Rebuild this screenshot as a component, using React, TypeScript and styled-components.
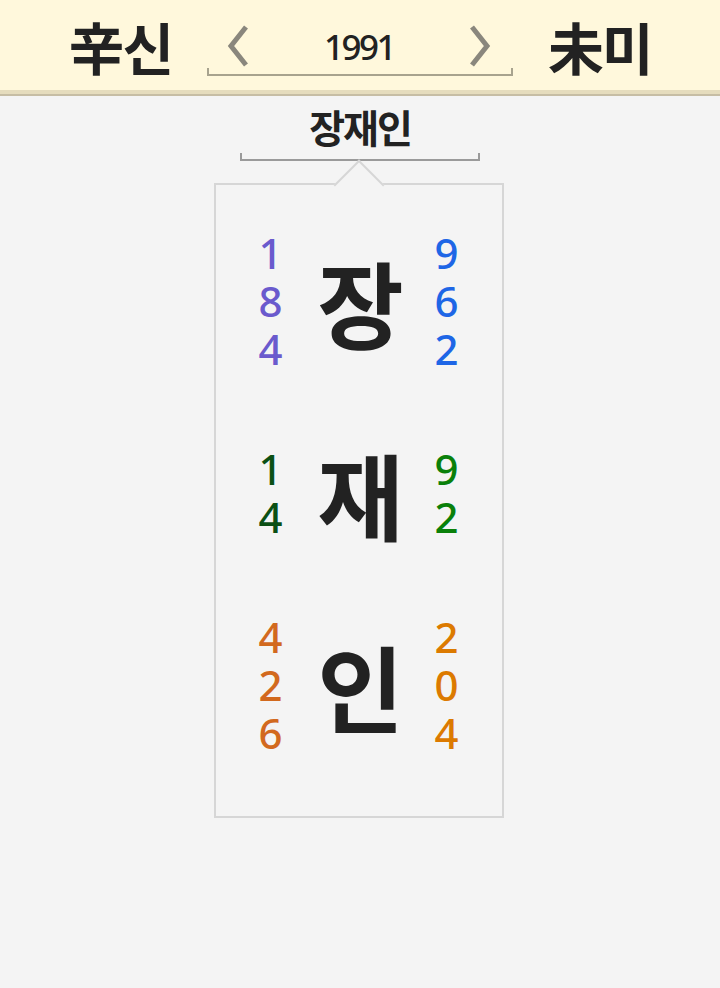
import React from "react";
import styled, { createGlobalStyle } from "styled-components";

const Global = createGlobalStyle`
  html, body { margin: 0; padding: 0; background: #f4f4f4; }
  body { font-family: "Noto Sans CJK KR", "Noto Sans", sans-serif; color: #222; }
  * { box-sizing: border-box; }
`;

const Page = styled.div`
  min-height: 988px;
  background: #f4f4f4;
`;

const HeaderBar = styled.header`
  border-bottom: 2px solid #c6bda4;
`;

const HeaderInner = styled.div`
  height: 94px;
  background: #fff8dc;
  border-bottom: 4px solid #e5dcbd;
  display: flex;
  justify-content: center;
  align-items: flex-start;
  gap: 35px;
`;

const Pillar = styled.div`
  font-family: "Noto Sans CJK KR", sans-serif;
  font-weight: 700;
  font-size: 56px;
  line-height: 1;
  padding-top: 18px;
  color: #222;
  letter-spacing: -2px;
`;

const YearNav = styled.div`
  width: 306px;
  padding-top: 24px;
  display: flex;
  flex-direction: column;
`;

const YearRow = styled.div`
  height: 44px;
  display: flex;
  align-items: center;
  justify-content: space-between;
  padding: 0 20px 0 18px;
`;

const Year = styled.span`
  font-family: "Noto Sans", sans-serif;
  font-size: 35px;
  font-weight: 500;
  letter-spacing: -2.5px;
  line-height: 1;
  color: #222;
`;

const Bracket = styled.div<{ $color: string }>`
  height: 8px;
  border: 2px solid ${(p) => p.$color};
  border-top: none;
`;

const Chevron = ({ dir }: { dir: "left" | "right" }) => (
  <svg width="26" height="44" viewBox="0 0 26 44">
    <path
      d={dir === "left" ? "M21 3 L6 22 L21 41" : "M5 3 L20 22 L5 41"}
      fill="none"
      stroke="#8a877d"
      strokeWidth="5"
    />
  </svg>
);

const Body = styled.main`
  display: flex;
  flex-direction: column;
  align-items: center;
  padding-top: 7px;
`;

const Title = styled.h1`
  margin: 0;
  font-family: "Noto Sans CJK KR", sans-serif;
  font-weight: 700;
  font-size: 39px;
  line-height: 46px;
  letter-spacing: -2px;
  color: #222;
`;

const TitleBracket = styled.div`
  width: 240px;
  margin-top: 4px;
  height: 8px;
  border: 2px solid #9a9a9a;
  border-top: none;
`;

const Card = styled.section`
  position: relative;
  width: 290px;
  height: 635px;
  margin-top: 22px;
  margin-left: -3px;
  border: 2px solid #d6d6d6;
  background: #f4f4f4;
  padding: 20px 0 33px;
  display: flex;
  flex-direction: column;

  &::before {
    content: "";
    position: absolute;
    top: -18px;
    left: 50%;
    width: 34px;
    height: 34px;
    background: #f4f4f4;
    border-top: 2px solid #d6d6d6;
    border-left: 2px solid #d6d6d6;
    transform: translateX(-50%) rotate(45deg);
  }
`;

const Row = styled.div`
  height: 192px;
  display: grid;
  grid-template-columns: 40px 136px 40px;
  justify-content: center;
  align-items: center;
`;

const Digits = styled.div<{ $color: string }>`
  display: flex;
  flex-direction: column;
  align-items: center;
  font-family: "Noto Sans", sans-serif;
  font-weight: 500;
  font-size: 42px;
  color: ${(p) => p.$color};
`;

const Digit = styled.span`
  display: block;
  height: 48px;
  line-height: 48px;
`;

const Big = styled.div`
  text-align: center;
  font-family: "Noto Sans CJK KR", sans-serif;
  font-weight: 700;
  font-size: 94px;
  line-height: 1;
  color: #222;
  padding-left: 4px;
`;

type RowData = {
  ch: string;
  left: string[];
  right: string[];
  lc: string;
  rc: string;
};

const rows: RowData[] = [
  { ch: "장", left: ["1", "8", "4"], right: ["9", "6", "2"], lc: "#6a5acd", rc: "#1e66e6" },
  { ch: "재", left: ["1", "4"], right: ["9", "2"], lc: "#0b5014", rc: "#0a800a" },
  { ch: "인", left: ["4", "2", "6"], right: ["2", "0", "4"], lc: "#d2691e", rc: "#dc7a00" },
];

export default function App() {
  return (
    <Page>
      <Global />
      <HeaderBar>
        <HeaderInner>
          <Pillar>辛신</Pillar>
          <YearNav>
            <YearRow>
              <Chevron dir="left" />
              <Year>1991</Year>
              <Chevron dir="right" />
            </YearRow>
            <Bracket $color="#a8a38e" />
          </YearNav>
          <Pillar>未미</Pillar>
        </HeaderInner>
      </HeaderBar>
      <Body>
        <Title>장재인</Title>
        <TitleBracket />
        <Card>
          {rows.map((r) => (
            <Row key={r.ch}>
              <Digits $color={r.lc}>
                {r.left.map((d, i) => (
                  <Digit key={i}>{d}</Digit>
                ))}
              </Digits>
              <Big>{r.ch}</Big>
              <Digits $color={r.rc}>
                {r.right.map((d, i) => (
                  <Digit key={i}>{d}</Digit>
                ))}
              </Digits>
            </Row>
          ))}
        </Card>
      </Body>
    </Page>
  );
}
